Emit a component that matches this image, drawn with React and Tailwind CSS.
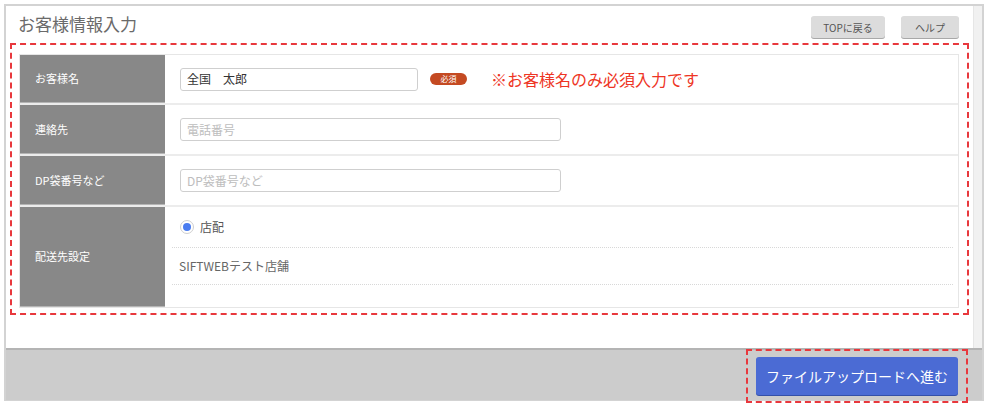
import React from 'react';

const font = { fontFamily: '"Noto Sans CJK JP", "Noto Sans", sans-serif' };

function Row({ label, height, children }) {
  return (
    <div className={`flex border-b-2 border-[#ececec] last:border-b-0 ${height}`}>
      <div className="w-[145px] shrink-0 bg-[#888888] flex items-center pl-[15px] text-[11px] text-white border-b border-[#b5b5b5]">
        {label}
      </div>
      <div className="flex-1 bg-white">{children}</div>
    </div>
  );
}

export default function App() {
  return (
    <div className="w-[988px] h-[410px] bg-white pt-[4px] pl-[4px]" style={font}>
      <div className="w-[980px] border-2 border-[#d3d3d3] border-b-[1px]">
        <div className="flex">
          {/* main content */}
          <div className="w-[967px] bg-white">
            <div className="flex items-start justify-between h-[37px]">
              <h1 className="pl-[12px] pt-[6px] text-[17px] text-[#6a6a6a] leading-[24px]">お客様情報入力</h1>
              <div className="flex gap-[16px] pt-[10px] pr-[14px]">
                <button className="w-[74px] h-[22px] rounded-[3px] bg-[#dcdcdc] text-[10px] text-[#555] shadow-[0_1px_0_#a8a8a8]">
                  TOPに戻る
                </button>
                <button className="w-[58px] h-[22px] rounded-[3px] bg-[#dcdcdc] text-[10px] text-[#555] shadow-[0_1px_0_#a8a8a8]">
                  ヘルプ
                </button>
              </div>
            </div>

            {/* dashed area */}
            <div className="ml-[4px] w-[959px] border-2 border-dashed border-[#e8383d] pt-[9px] pb-[5px] pl-[7px] pr-[8px]">
              <div className="border border-[#e6e6e6]">
                <Row label="お客様名" height="h-[50px]">
                  <div className="flex items-center h-full pl-[15px]">
                    <div className="w-[238px] h-[23px] border border-[#cfcfcf] rounded-[3px] flex items-center px-[6px] text-[12px] text-[#333]">
                      全国　太郎
                    </div>
                    <span className="ml-[12px] w-[37px] h-[12px] rounded-full bg-[#c44a22] text-white text-[8px] leading-[12px] text-center">
                      必須
                    </span>
                    <span className="ml-[24px] text-[16px] text-[#ee3524] leading-[20px]">※お客様名のみ必須入力です</span>
                  </div>
                </Row>
                <Row label="連絡先" height="h-[51px]">
                  <div className="flex items-center h-full pl-[15px]">
                    <div className="w-[381px] h-[23px] border border-[#cfcfcf] rounded-[3px] flex items-center px-[6px] text-[12px] text-[#bdbdbd]">
                      電話番号
                    </div>
                  </div>
                </Row>
                <Row label="DP袋番号など" height="h-[51px]">
                  <div className="flex items-center h-full pl-[15px]">
                    <div className="w-[381px] h-[23px] border border-[#cfcfcf] rounded-[3px] flex items-center px-[6px] text-[12px] text-[#bdbdbd]">
                      DP袋番号など
                    </div>
                  </div>
                </Row>
                <Row label="配送先設定" height="h-[100px]">
                  <div className="pl-[7px] pr-[5px]">
                    <div className="h-[41px] flex items-center pl-[8px] border-b border-dotted border-[#d8d8d8]">
                      <span className="w-[14px] h-[14px] rounded-full border border-[#cfcfcf] bg-white flex items-center justify-center">
                        <span className="w-[8px] h-[8px] rounded-full bg-[#4a7cf0]" />
                      </span>
                      <span className="ml-[6px] text-[12px] text-[#555]">店配</span>
                    </div>
                    <div className="h-[37px] flex items-center pl-[7px] border-b border-dotted border-[#d8d8d8] text-[12px] text-[#666]">
                      SIFTWEBテスト店舗
                    </div>
                  </div>
                </Row>
              </div>
            </div>
            <div className="h-[33px]" />
          </div>
          {/* right strip */}
          <div className="flex-1 bg-[#f1f1f1] border-l border-[#e6e6e6]" />
        </div>

        {/* footer */}
        <div className="h-[52px] bg-[#cccccc] border-t-2 border-[#b4b4b4] flex justify-end items-start pr-[14px]">
          <div className="border-2 border-dashed border-[#e8383d] px-[8px] pt-[6px] pb-[4px] mt-[-1px] h-[54px]">
            <button className="w-[202px] h-[38px] rounded-[3px] bg-[#4b6bd4] text-white text-[14px] shadow-[0_1px_0_#3450a8]">
              ファイルアップロードへ進む
            </button>
          </div>
        </div>
      </div>
    </div>
  );
}
